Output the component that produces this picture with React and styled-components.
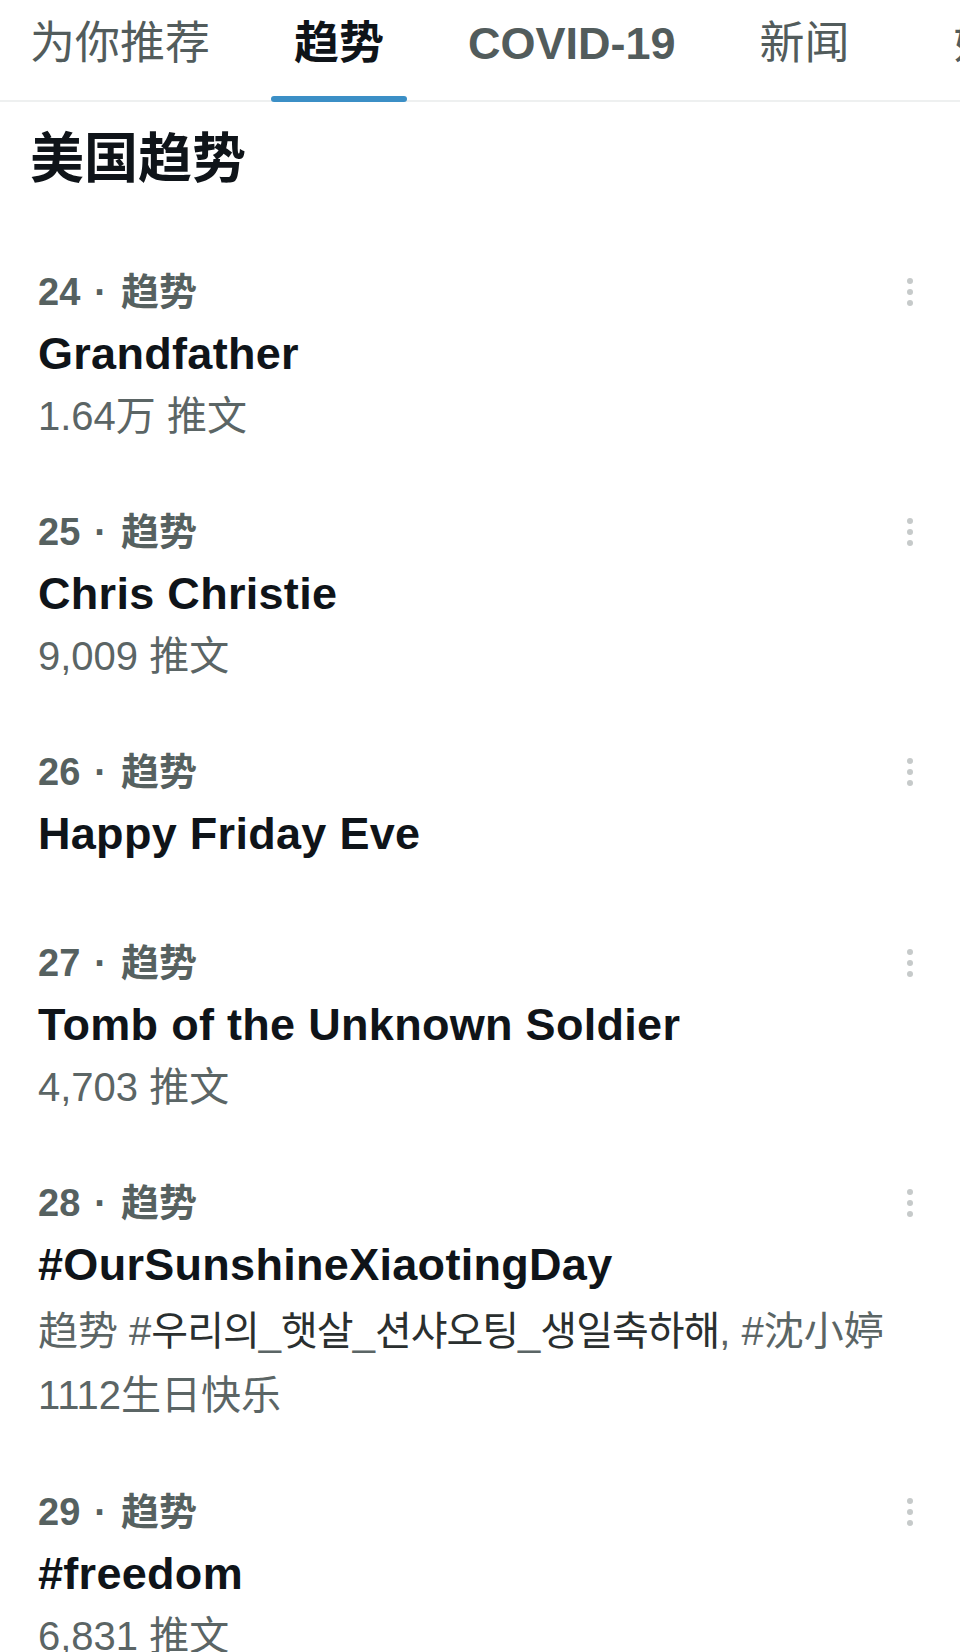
import React from 'react';
import styled, { createGlobalStyle } from 'styled-components';

const GlobalStyle = createGlobalStyle`
  html, body {
    margin: 0;
    padding: 0;
    background: #ffffff;
    overflow: hidden;
  }

  body {
    font-family: 'Liberation Sans', 'Noto Sans CJK SC', sans-serif;
    color: #0f1419;
  }
`;

const Page = styled.div`
  width: 960px;
  height: 1652px;
  overflow: hidden;
  background: #ffffff;
`;

const TabBar = styled.nav`
  display: flex;
  gap: 84px;
  height: 102px;
  padding-left: 30px;
  box-sizing: border-box;
  overflow: hidden;
  white-space: nowrap;
  box-shadow: inset 0 -2px 0 #eef0f0;
`;

const Tab = styled.div`
  display: flex;
  flex-direction: column;
  align-items: center;
  justify-content: space-between;
  height: 102px;
  flex-shrink: 0;

  /* the next tab only peeks in at the right edge */
  &:last-child {
    margin-left: 20px;
  }
`;

const TabLabel = styled.span`
  padding-top: 16px;
  font-size: 45px;
  line-height: 56px;
  font-weight: ${(p) => (p.$bold ? 700 : 400)};
  color: ${(p) => (p.$active ? '#0f1419' : '#525c5c')};
`;

const Indicator = styled.span`
  display: block;
  width: calc(100% + 46px);
  height: 6px;
  border-radius: 3px;
  background: #3b8fc6;
  flex-shrink: 0;
`;

const SectionTitle = styled.h2`
  margin: 0;
  padding: 20px 30px 38px;
  font-size: 54px;
  line-height: 74px;
  font-weight: 700;
  color: #0f1419;
`;

const TrendList = styled.div`
  display: flex;
  flex-direction: column;
`;

const TrendRow = styled.div`
  display: flex;
  align-items: flex-start;
  min-height: 191px;
  padding: 27px 42px 27px 38px;
  box-sizing: border-box;
`;

const TrendBody = styled.div`
  flex: 1;
  min-width: 0;
  display: flex;
  flex-direction: column;
`;

const Meta = styled.div`
  font-size: 38px;
  line-height: 62px;
  font-weight: 700;
  color: #566160;
`;

const Sep = styled.span`
  padding: 0 14px;
`;

const Title = styled.div`
  font-size: 45px;
  line-height: 62px;
  font-weight: 700;
  letter-spacing: 0.3px;
  color: #0f1419;
`;

const Count = styled.div`
  font-size: 40px;
  line-height: 62px;
  color: #5b6565;
`;

const Desc = styled.div`
  font-size: 40px;
  line-height: 64px;
  color: #5b6565;
`;

const Hangul = styled.span`
  font-family: 'Noto Sans CJK KR', 'Noto Sans CJK SC', sans-serif;
  letter-spacing: -1px;
  color: #2a2f2f;
`;

const MoreButton = styled.div`
  display: flex;
  flex-direction: column;
  align-items: center;
  justify-content: center;
  gap: 5px;
  width: 16px;
  height: 62px;
  flex-shrink: 0;
`;

const Dot = styled.span`
  width: 6px;
  height: 6px;
  border-radius: 50%;
  background: #c6caca;
`;

const tabs = [
  { label: '为你推荐', bold: false },
  { label: '趋势', bold: true, active: true },
  { label: 'COVID-19', bold: true },
  { label: '新闻', bold: false },
  { label: '娱乐', bold: false },
];

const trends = [
  { rank: 24, title: 'Grandfather', count: '1.64万 推文' },
  { rank: 25, title: 'Chris Christie', count: '9,009 推文' },
  { rank: 26, title: 'Happy Friday Eve' },
  { rank: 27, title: 'Tomb of the Unknown Soldier', count: '4,703 推文' },
  {
    rank: 28,
    title: '#OurSunshineXiaotingDay',
    desc: (
      <>
        趋势 #<Hangul>우리의</Hangul>_<Hangul>햇살</Hangul>_<Hangul>션샤오팅</Hangul>_
        <Hangul>생일축하해</Hangul>, #沈小婷1112生日快乐
      </>
    ),
  },
  { rank: 29, title: '#freedom', count: '6,831 推文' },
];

const App = () => {
  return (
    <Page>
      <GlobalStyle />
      <TabBar>
        {tabs.map((tab) => (
          <Tab key={tab.label}>
            <TabLabel $active={tab.active} $bold={tab.bold}>
              {tab.label}
            </TabLabel>
            {tab.active && <Indicator />}
          </Tab>
        ))}
      </TabBar>

      <SectionTitle>美国趋势</SectionTitle>

      <TrendList>
        {trends.map((trend) => (
          <TrendRow key={trend.rank}>
            <TrendBody>
              <Meta>
                {trend.rank}
                <Sep>·</Sep>
                趋势
              </Meta>
              <Title>{trend.title}</Title>
              {trend.count && <Count>{trend.count}</Count>}
              {trend.desc && <Desc>{trend.desc}</Desc>}
            </TrendBody>
            <MoreButton aria-label="更多">
              <Dot />
              <Dot />
              <Dot />
            </MoreButton>
          </TrendRow>
        ))}
      </TrendList>
    </Page>
  );
};

export default App;
